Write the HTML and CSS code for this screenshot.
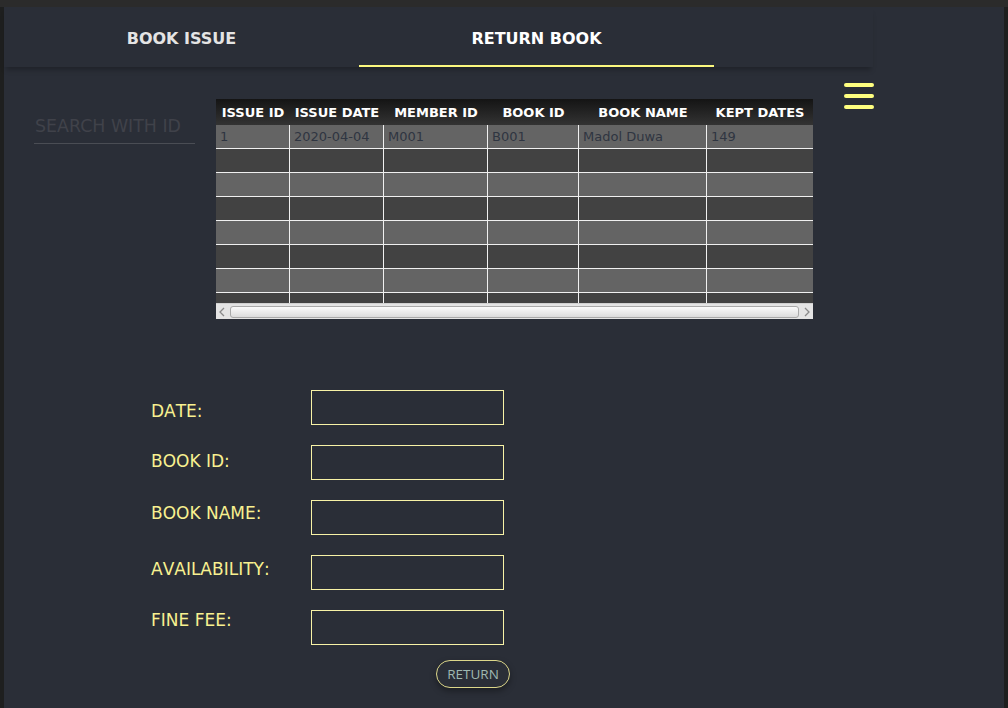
FILE: index.html
```html
<!DOCTYPE html>
<html lang="en">
<head>
<meta charset="utf-8">
<title>Return Book</title>
<link rel="stylesheet" href="styles.css">
</head>
<body>
<div class="frame-top"></div>
<div class="window">
  <main class="panel">
    <nav class="tabs">
      <div class="tab">BOOK ISSUE</div>
      <div class="tab tab-active">RETURN BOOK</div>
    </nav>

    <section class="top-row">
      <div class="search">
        <input class="search-input" type="text" placeholder="SEARCH WITH ID">
      </div>

      <div class="table-box">
        <div class="table-view">
          <table class="records">
            <colgroup>
              <col class="c1"><col class="c2"><col class="c3"><col class="c4"><col class="c5"><col class="c6">
            </colgroup>
            <thead>
              <tr><th>ISSUE ID</th><th>ISSUE DATE</th><th>MEMBER ID</th><th>BOOK ID</th><th>BOOK NAME</th><th>KEPT DATES</th></tr>
            </thead>
            <tbody>
              <tr><td>1</td><td>2020-04-04</td><td>M001</td><td>B001</td><td>Madol Duwa</td><td>149</td></tr>
              <tr><td></td><td></td><td></td><td></td><td></td><td></td></tr>
              <tr><td></td><td></td><td></td><td></td><td></td><td></td></tr>
              <tr><td></td><td></td><td></td><td></td><td></td><td></td></tr>
              <tr><td></td><td></td><td></td><td></td><td></td><td></td></tr>
              <tr><td></td><td></td><td></td><td></td><td></td><td></td></tr>
              <tr><td></td><td></td><td></td><td></td><td></td><td></td></tr>
              <tr><td></td><td></td><td></td><td></td><td></td><td></td></tr>
            </tbody>
          </table>
        </div>
        <div class="hscroll">
          <svg class="arrow" width="14" height="16" viewBox="0 0 14 16"><path d="M8 4 L4 8 L8 12" fill="none" stroke="#8a8a8a" stroke-width="1.3"/></svg>
          <div class="thumb"></div>
          <svg class="arrow" width="14" height="16" viewBox="0 0 14 16"><path d="M6 4 L10 8 L6 12" fill="none" stroke="#8a8a8a" stroke-width="1.3"/></svg>
        </div>
      </div>

      <button class="menu" type="button" aria-label="Menu">
        <span class="bar"></span><span class="bar"></span><span class="bar"></span>
      </button>
    </section>

    <form class="return-form">
      <label class="label l1">DATE:</label><input class="field" type="text">
      <label class="label l2">BOOK ID:</label><input class="field" type="text">
      <label class="label l3">BOOK NAME:</label><input class="field" type="text">
      <label class="label l4">AVAILABILITY:</label><input class="field" type="text">
      <label class="label l5">FINE FEE:</label><input class="field" type="text">
      <div class="actions"><button class="return-btn" type="button">RETURN</button></div>
    </form>
  </main>
</div>
</body>
</html>
```
FILE: styles.css
```css
* { box-sizing: border-box; }

html, body {
  margin: 0;
  padding: 0;
  width: 1008px;
  height: 708px;
  overflow: hidden;
  background: #1e1f1f;
  font-family: "DejaVu Sans", "Liberation Sans", sans-serif;
}

.frame-top {
  height: 7px;
  background: #2b2b2b;
}

.window {
  display: flex;
  height: 701px;
  padding: 0 4px;
}

.panel {
  flex: 1;
  background: #2a2e37;
  display: flex;
  flex-direction: column;
}

/* Tabs */
.tabs {
  display: flex;
  width: 869px;
  height: 60px;
  box-shadow: 0 5px 5px -2px rgba(0, 0, 0, 0.25);
  position: relative;
  z-index: 1;
}

.tab {
  width: 355px;
  height: 60px;
  display: flex;
  align-items: center;
  justify-content: center;
  padding-top: 2px;
  font-weight: bold;
  font-size: 16px;
  color: #e4e4e4;
}

.tab-active {
  color: #ffffff;
  box-shadow: inset 0 -2px 0 #fbf87e;
}

/* Top row: search, table, menu */
.top-row {
  display: flex;
  align-items: flex-start;
  padding: 16px 0 0 30px;
}

.search {
  width: 161px;
  margin-top: 29px;
}

.search-input {
  width: 161px;
  height: 32px;
  padding: 0 0 4px 1px;
  border: none;
  border-bottom: 1px solid #4a4d54;
  background: transparent;
  font-family: "DejaVu Sans", sans-serif;
  font-size: 17.4px;
  color: #c8c8c8;
  outline: none;
}

.search-input::placeholder {
  color: #40424a;
}

.table-box {
  width: 597px;
  margin: 16px 0 0 21px;
}

.table-view {
  height: 204px;
  overflow: hidden;
}

.records {
  width: 597px;
  table-layout: fixed;
  border-collapse: separate;
  border-spacing: 0;
}

.c1 { width: 74px; }
.c2 { width: 94px; }
.c3 { width: 104px; }
.c4 { width: 91px; }
.c5 { width: 128px; }
.c6 { width: 106px; }

.records th {
  height: 26px;
  padding: 0;
  background: linear-gradient(#141414, #333333);
  color: #ffffff;
  font-size: 13px;
  font-weight: bold;
  text-align: center;
  white-space: nowrap;
  overflow: hidden;
}

.records td {
  height: 24px;
  line-height: 23px;
  padding: 0 0 0 4px;
  border-right: 1px solid #f0f0f0;
  border-bottom: 1px solid #f0f0f0;
  font-size: 13px;
  color: #2f3541;
  white-space: nowrap;
  overflow: hidden;
}

.records td:last-child { border-right: none; }

.records tbody tr:nth-child(odd) td { background: #646464; }
.records tbody tr:nth-child(even) td { background: #424242; }

.hscroll {
  display: flex;
  align-items: center;
  height: 16px;
  background: #e4e4e4;
  border-top: 1px solid #d0d0d0;
}

.arrow { flex: none; }

.thumb {
  flex: 1;
  height: 12px;
  border: 1px solid #a9a9a9;
  border-radius: 3px;
  background: linear-gradient(#fbfbfb, #dcdcdc);
}

/* Hamburger */
.menu {
  display: flex;
  flex-direction: column;
  gap: 7px;
  width: 30px;
  margin-left: 31px;
  padding: 0;
  border: none;
  background: transparent;
}

.bar {
  display: block;
  width: 30px;
  height: 4px;
  border-radius: 2px;
  background: #ffff80;
}

/* Form */
.return-form {
  display: grid;
  grid-template-columns: 160px 193px;
  grid-auto-rows: auto;
  row-gap: 20px;
  margin: 71px 0 0 147px;
  align-items: start;
}

.label {
  font-size: 17px;
  line-height: 20px;
  color: #f8f190;
  font-kerning: none;
  white-space: nowrap;
}

.l1 { margin-top: 11px; }
.l2 { margin-top: 6px; }
.l3 { margin-top: 3px; }
.l4 { margin-top: 4px; }
.l5 { margin-top: 0; }

.field {
  width: 193px;
  height: 35px;
  border: 1px solid #f7f2a6;
  background: transparent;
  outline: none;
}

.actions {
  grid-column: 2;
  margin-top: -5px;
}

.return-btn {
  margin-left: 125px;
  width: 74px;
  height: 28px;
  border: 1px solid #dcd78a;
  border-radius: 14px;
  background: #2a2e37;
  color: #9fb8b1;
  font-family: "Open Sans", sans-serif;
  font-size: 13.5px;
  padding: 0;
  box-shadow: 0 3px 6px rgba(0, 0, 0, 0.35);
}
```
